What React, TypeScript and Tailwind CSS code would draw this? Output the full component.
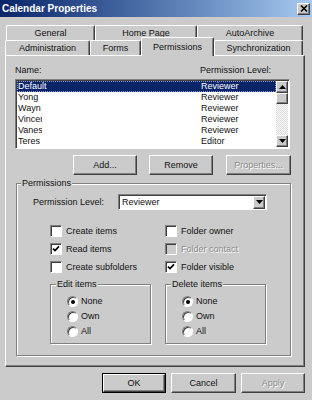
import React from "react";

// Classic Win2000 3D edges
const raised =
  "border border-t-white border-l-white border-r-[#404040] border-b-[#404040] shadow-[inset_-1px_-1px_0_#808080]";
const sunken =
  "border border-t-[#808080] border-l-[#808080] border-r-white border-b-white shadow-[inset_1px_1px_0_#404040]";
const etched =
  "border border-[#808080] shadow-[inset_1px_1px_0_#fff,1px_1px_0_#fff]";
const disabledText = "text-[#8a8a8a] [text-shadow:1px_1px_0_#fff]";

const topTabs = [
  { label: "General", w: "w-[89px]" },
  { label: "Home Page", w: "w-[102px]" },
  { label: "AutoArchive", w: "w-[106px]" },
];

const bottomTabs = [
  { label: "Administration", w: "w-[85px]" },
  { label: "Forms", w: "w-[51px]" },
  { label: "Permissions", w: "w-[73px]", active: true },
  { label: "Synchronization", w: "w-[89px]" },
];

const members = [
  { name: "Default", level: "Reviewer" },
  { name: "Yong", level: "Reviewer" },
  { name: "Wayn", level: "Reviewer" },
  { name: "Vincer", level: "Reviewer" },
  { name: "Vanes", level: "Reviewer" },
  { name: "Teres", level: "Editor" },
];

function Arrow({ dir }: { dir: "up" | "down" }) {
  return (
    <svg width="7" height="4" viewBox="0 0 7 4" aria-hidden>
      {dir === "up" ? (
        <path d="M3.5 0 L7 4 L0 4 Z" fill="#000" />
      ) : (
        <path d="M0 0 L7 0 L3.5 4 Z" fill="#000" />
      )}
    </svg>
  );
}

function Button({
  label,
  w,
  disabled,
  isDefault,
}: {
  label: string;
  w: string;
  disabled?: boolean;
  isDefault?: boolean;
}) {
  const inner = (
    <div
      className={`flex h-full w-full items-center justify-center bg-[#cbcbcb] ${raised} ${
        disabled ? disabledText : ""
      }`}
    >
      {label}
    </div>
  );
  if (isDefault) {
    return <div className={`h-[20px] border border-black ${w}`}>{inner}</div>;
  }
  return <div className={`h-[20px] ${w}`}>{inner}</div>;
}

function Checkbox({
  label,
  checked,
  disabled,
}: {
  label: string;
  checked?: boolean;
  disabled?: boolean;
}) {
  return (
    <div className="flex h-[18px] items-center">
      <div
        className={`flex h-[12px] w-[12px] items-center justify-center ${sunken} ${
          disabled ? "bg-[#cbcbcb]" : "bg-white"
        }`}
      >
        {checked && (
          <svg width="8" height="8" viewBox="0 0 8 8" aria-hidden>
            <polyline points="1,3.6 3,5.6 7,1.4" fill="none" stroke="#000" strokeWidth="1.7" />
          </svg>
        )}
      </div>
      <span className={`ml-[4px] ${disabled ? disabledText : ""}`}>{label}</span>
    </div>
  );
}

function Radio({ label, checked }: { label: string; checked?: boolean }) {
  return (
    <div className="flex h-[15px] items-center">
      <div className="flex h-[11px] w-[11px] items-center justify-center rounded-full border border-t-[#808080] border-l-[#808080] border-r-white border-b-white bg-white shadow-[inset_1px_1px_0_#404040]">
        {checked && <div className="h-[4px] w-[4px] rounded-full bg-black" />}
      </div>
      <span className="ml-[3px]">{label}</span>
    </div>
  );
}

function RadioGroup({ title }: { title: string }) {
  return (
    <fieldset className={`w-[101px] pb-[4px] ${etched}`}>
      <legend className="ml-[5px] bg-[#cbcbcb] px-[1px] leading-[11px]">{title}</legend>
      <div className="mt-[4px] pl-[16px]">
        <Radio label="None" checked />
        <Radio label="Own" />
        <Radio label="All" />
      </div>
    </fieldset>
  );
}

export default function App() {
  return (
    <div className="h-[400px] w-[312px] overflow-hidden bg-[#cbcbcb] font-['Liberation_Sans',Arial,sans-serif] text-[9px] leading-[11px] text-[#111]">
      {/* Title bar */}
      <div className="flex h-[17px] items-center justify-between bg-linear-to-r from-[#0a246a] to-[#a6caf0] pl-[2px] pr-[2px]">
        <span className="text-[10px] font-bold text-white">Calendar Properties</span>
        <div className={`flex h-[12px] w-[13px] items-center justify-center bg-[#cbcbcb] ${raised}`}>
          <svg width="8" height="7" viewBox="0 0 8 7" aria-hidden>
            <path d="M1 0.5 L7 6.5 M7 0.5 L1 6.5" stroke="#000" strokeWidth="1.6" />
          </svg>
        </div>
      </div>

      {/* Tabs */}
      <div className="mt-[8px]">
        <div className="ml-[6px] flex h-[15px]">
          {topTabs.map((t) => (
            <div
              key={t.label}
              className={`flex h-[15px] items-center justify-center rounded-t-[2px] border-t border-l border-r border-t-white border-l-white border-r-[#404040] shadow-[inset_-1px_0_0_#808080] ${t.w}`}
            >
              {t.label}
            </div>
          ))}
        </div>
        <div className="ml-[5px] flex h-[15px] items-end">
          {bottomTabs.map((t) =>
            t.active ? (
              <div
                key={t.label}
                className={`relative z-10 -mb-px flex h-[19px] items-start justify-center rounded-t-[2px] border-t border-l border-r border-t-white border-l-white border-r-[#404040] bg-[#cbcbcb] pt-[4px] shadow-[inset_-1px_0_0_#808080] ${t.w}`}
              >
                {t.label}
              </div>
            ) : (
              <div
                key={t.label}
                className={`flex h-[15px] items-center justify-center rounded-t-[2px] border-t border-l border-r border-t-white border-l-white border-r-[#404040] shadow-[inset_-1px_0_0_#808080] ${t.w}`}
              >
                {t.label}
              </div>
            )
          )}
        </div>
      </div>

      {/* Tab panel */}
      <div className={`relative z-0 ml-[5px] flex h-[312px] w-[300px] flex-col ${raised}`}>
        <div className="ml-[9px] mt-[9px] flex h-[11px] items-center">
          <span className="w-[185px]">Name:</span>
          <span>Permission Level:</span>
        </div>

        {/* Member list */}
        <div className={`ml-[9px] mt-[3px] flex h-[70px] w-[275px] bg-white p-px ${sunken}`}>
          <div className="flex-1">
            {members.map((m, i) => {
              const sel = i === 0;
              return (
                <div
                  key={m.name}
                  className={`flex h-[11px] items-center ${
                    sel
                      ? "bg-[#0a246a] text-white outline-1 -outline-offset-1 outline-dotted outline-[#8c9cc8]"
                      : ""
                  }`}
                >
                  <div className="w-[184px] pl-[1px]">
                    <div className={sel ? "" : "w-[24px] overflow-hidden whitespace-nowrap"}>{m.name}</div>
                  </div>
                  <span>{m.level}</span>
                </div>
              );
            })}
          </div>
          <div className="flex w-[12px] flex-col">
            <div className={`flex h-[12px] items-center justify-center bg-[#cbcbcb] ${raised}`}>
              <Arrow dir="up" />
            </div>
            <div className={`h-[11px] bg-[#cbcbcb] ${raised}`} />
            <div className="flex-1 bg-[repeating-conic-gradient(#ffffff_0_25%,#d8d8d8_0_50%)] bg-[length:2px_2px]" />
            <div className={`flex h-[12px] items-center justify-center bg-[#cbcbcb] ${raised}`}>
              <Arrow dir="down" />
            </div>
          </div>
        </div>

        <div className="ml-[67px] mt-[6px] flex">
          <Button label="Add..." w="w-[64px]" />
          <div className="ml-[12px]">
            <Button label="Remove" w="w-[64px]" />
          </div>
          <div className="ml-[13px]">
            <Button label="Properties..." w="w-[65px]" disabled />
          </div>
        </div>

        {/* Permissions group */}
        <fieldset className={`ml-[10px] mt-[3px] w-[275px] pb-[11px] ${etched}`}>
          <legend className="ml-[4px] bg-[#cbcbcb] px-[1px] leading-[11px]">Permissions</legend>

          <div className="mt-[5px] flex items-center pl-[16px]">
            <span className="w-[85px]">Permission Level:</span>
            <div className={`flex h-[16px] w-[149px] items-center bg-white p-px ${sunken}`}>
              <span className="flex-1 pl-[2px]">Reviewer</span>
              <div className={`flex h-[13px] w-[12px] items-center justify-center bg-[#cbcbcb] ${raised}`}>
                <Arrow dir="down" />
              </div>
            </div>
          </div>

          <div className="mt-[12px] grid grid-cols-[115px_1fr] pl-[33px]">
            <Checkbox label="Create items" />
            <Checkbox label="Folder owner" />
            <Checkbox label="Read items" checked />
            <Checkbox label="Folder contact" disabled />
            <Checkbox label="Create subfolders" />
            <Checkbox label="Folder visible" checked />
          </div>

          <div className="mt-[3px] flex gap-[14px] pl-[33px]">
            <RadioGroup title="Edit items" />
            <RadioGroup title="Delete items" />
          </div>
        </fieldset>
      </div>

      {/* Dialog buttons */}
      <div className="mt-[6px] flex justify-end gap-[5px] pr-[7px]">
        <Button label="OK" w="w-[64px]" isDefault />
        <Button label="Cancel" w="w-[65px]" />
        <Button label="Apply" w="w-[64px]" disabled />
      </div>
    </div>
  );
}
